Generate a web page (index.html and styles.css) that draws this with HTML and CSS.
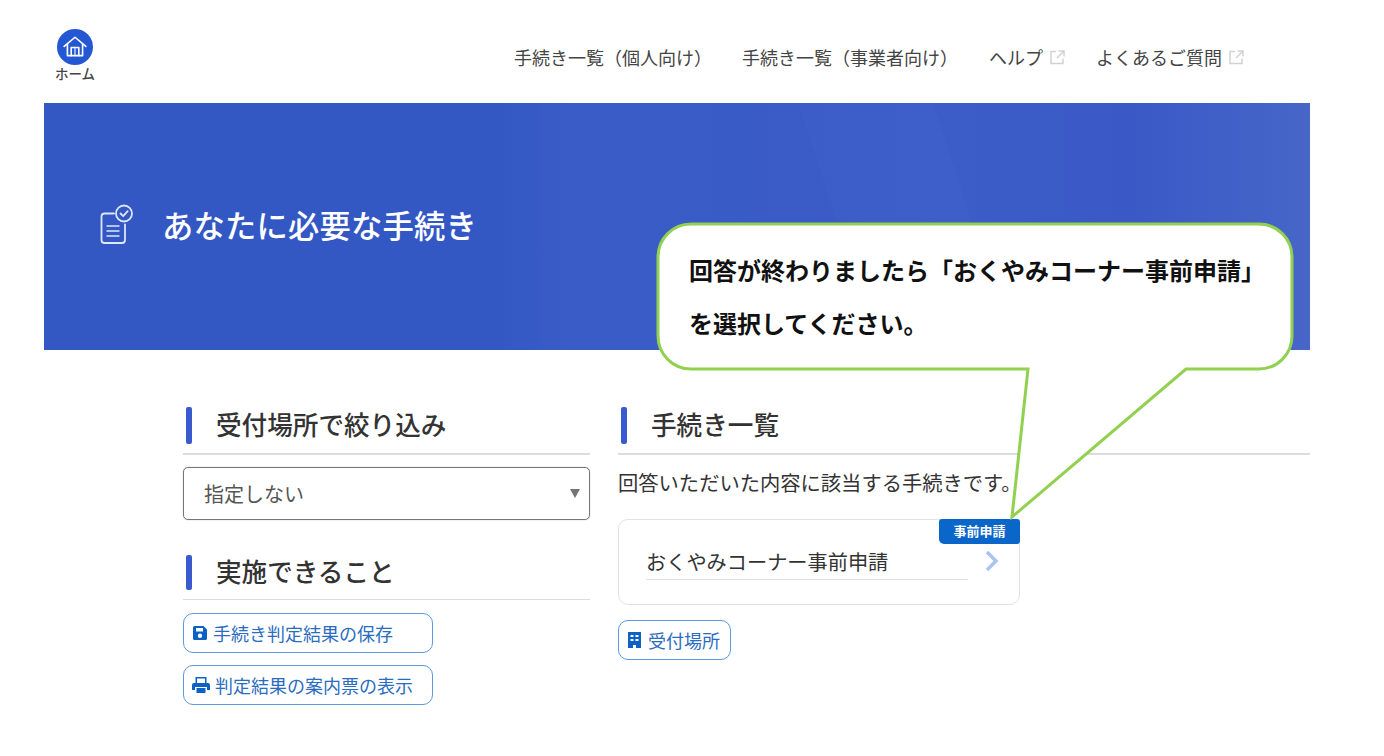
FILE: index.html
```html
<!DOCTYPE html>
<html lang="ja">
<head>
<meta charset="utf-8">
<title>あなたに必要な手続き</title>
<link rel="stylesheet" href="styles.css">
</head>
<body>
<div class="page">
  <header class="header">
    <a class="home">
      <span class="home-circle">
        <svg width="26" height="26" viewBox="0 0 24 24" fill="none" stroke="#fff" stroke-width="1.5" stroke-linejoin="round" stroke-linecap="round"><path d="M2 11.500 12 3l10 8.500"/><path d="M5 9.500v10.500h14V9.500"/><path d="M8.500 20v-7.500h7V20"/><path d="M12 12.500V20" stroke-width="1"/></svg>
      </span>
      <span class="home-label">ホーム</span>
    </a>
    <nav class="nav">
      <a class="nav-item nav-wide">手続き一覧（個人向け）</a>
      <a class="nav-item nav-wide">手続き一覧（事業者向け）</a>
      <a class="nav-item">ヘルプ<svg class="ext" width="15" height="15" viewBox="0 0 15 15" fill="none" stroke="#d2d2d2" stroke-width="1.500"><path d="M6 1.500H1v12h12V8.500M8.500 1H14v5.500M14 1 7 8"/></svg></a>
      <a class="nav-item">よくあるご質問<svg class="ext" width="15" height="15" viewBox="0 0 15 15" fill="none" stroke="#d2d2d2" stroke-width="1.500"><path d="M6 1.500H1v12h12V8.500M8.500 1H14v5.500M14 1 7 8"/></svg></a>
    </nav>
  </header>

  <section class="hero">
    <svg class="hero-icon" width="36" height="42" viewBox="0 0 36 42" fill="none" stroke="#dfe6fa" stroke-width="1.800" stroke-linecap="round" stroke-linejoin="round"><path d="M16 9.500H6.500Q3.500 9.500 3.500 12.500V36Q3.500 39 6.500 39H24Q27 39 27 36V20.500"/><circle cx="26" cy="9.500" r="8"/><path d="M22.500 9.500l2.700 2.700 4.500-5"/><path d="M9 22h12M9 27h12M9 32h12" stroke-width="1.400"/></svg>
    <h1 class="hero-title">あなたに必要な手続き</h1>
  </section>

  <main class="main">
    <aside class="side">
      <h2 class="heading">受付場所で絞り込み</h2>
      <div class="select">
        <span>指定しない</span>
        <span class="caret"></span>
      </div>
      <h2 class="heading heading-thin">実施できること</h2>
      <div class="actions">
        <a class="btn btn-wide">
          <svg width="16" height="16" viewBox="0 0 16 16" fill="#0b62c4"><path fill-rule="evenodd" d="M2.500 1h9L15 4.500v9A1.500 1.500 0 0 1 13.500 15h-11A1.500 1.500 0 0 1 1 13.500v-11A1.500 1.500 0 0 1 2.500 1ZM4 3v3.500h7V3ZM8 8.500a2.200 2.200 0 1 0 0 4.400 2.200 2.200 0 0 0 0-4.400Z"/></svg>
          手続き判定結果の保存
        </a>
        <a class="btn btn-wide">
          <svg width="18" height="18" viewBox="0 0 18 18" fill="#0b62c4"><path fill-rule="evenodd" d="M3.500 1h11v6H13V2.500H5V7H3.500ZM2 7h14a2 2 0 0 1 2 2v5h-3v-3H3v3H0V9a2 2 0 0 1 2-2ZM4.500 12h9v5h-9Z"/></svg>
          判定結果の案内票の表示
        </a>
      </div>
    </aside>

    <section class="content">
      <h2 class="heading">手続き一覧</h2>
      <p class="lead">回答いただいた内容に該当する手続きです。</p>
      <div class="card">
        <span class="badge">事前申請</span>
        <div class="card-row">
          <span class="card-name">おくやみコーナー事前申請</span>
          <svg class="chev" width="16" height="22" viewBox="0 0 16 22" fill="none" stroke="#a9c3f2" stroke-width="3.500"><path d="M3 2l9 9-9 9"/></svg>
        </div>
      </div>
      <a class="btn btn-small">
        <svg width="15" height="18" viewBox="0 0 15 18" fill="#0b62c4"><path fill-rule="evenodd" d="M1 1h13v16H9v-3H6v3H1ZM3.500 4v2h3V4Zm5 0v2h3V4ZM3.500 8v2h3V8Zm5 0v2h3V8Z"/></svg>
        受付場所
      </a>
    </section>
  </main>

  <aside class="callout">
    <svg class="callout-shape" width="644" height="304" viewBox="0 0 644 304">
      <path d="M35 2H603A33 33 0 0 1 636 35V114A33 33 0 0 1 603 147H530L356 295 372 147H35A33 33 0 0 1 2 114V35A33 33 0 0 1 35 2Z" fill="#fff" stroke="#92d050" stroke-width="3"/>
    </svg>
    <p class="callout-text">回答が終わりましたら「おくやみコーナー事前申請」<br>を選択してください。</p>
  </aside>
</div>
</body>
</html>
```

FILE: styles.css
```css
* { box-sizing: border-box; }
html, body { margin: 0; padding: 0; background: #fff; }
body {
  font-family: "Noto Sans CJK JP", "Noto Sans", sans-serif;
  color: #333;
}
h1, h2, p { margin: 0; font-weight: 500; }
.page { position: relative; width: 1384px; height: 756px; overflow: hidden; }

.header {
  height: 103px;
  padding: 29px 0 0 55px;
  display: flex;
  align-items: flex-start;
}
.home { display: flex; flex-direction: column; align-items: center; width: 40px; }
.home-circle {
  width: 36px; height: 36px; border-radius: 50%;
  background: #2458d3;
  display: flex; align-items: center; justify-content: center;
}
.home-label { font-size: 13.500px; line-height: 16px; color: #444; white-space: nowrap; font-weight: 500; }

.nav {
  display: flex;
  align-items: center;
  margin-left: 419px;
  height: 56px;
  font-size: 18px;
  color: #444;
}
.nav-item { display: flex; align-items: center; white-space: nowrap; }
.nav-wide { margin-right: 30px; }
.nav-wide:nth-child(2) { margin-right: 31px; }
.ext { margin-left: 7px; margin-right: 31px; }

.hero {
  margin-left: 44px;
  width: 1266px;
  height: 247px;
  background:
    linear-gradient(72deg, transparent 62%, rgba(255,255,255,0.012) 62%, rgba(255,255,255,0.012) 72%, transparent 72%),
    linear-gradient(90deg, #3358c4 0%, #3358c4 36%, #3a5cc7 42%, #395bc6 55%, #3c5cc8 72%, #3a59c6 86%, #4766c8 100%);
  display: flex;
  align-items: center;
  padding: 0 0 0 54px;
}
.hero-icon { margin: -4px 27px 0 0; flex: none; }
.hero-title { font-size: 31.300px; color: #fff; font-weight: 500; margin: -4px 0 0 1px; letter-spacing: 0.2px; }

.main {
  display: flex;
  padding: 52px 0 0 183px;
  gap: 28px;
  width: 1310px;
}
.side { width: 407px; flex: none; }
.content { flex: 1; }

.heading {
  position: relative;
  height: 53px;
  padding: 1px 0 0 33px;
  font-size: 25.600px;
  line-height: 41px;
  color: #333;
  border-bottom: 2px solid #dcdcdc;
}
.heading::before {
  content: "";
  position: absolute;
  left: 3px; top: 5px;
  width: 6px; height: 37px;
  border-radius: 2px;
  background: #3a5bd0;
}
.heading-thin { border-bottom-width: 1px; margin-top: 30px; height: 50px; padding-top: 0; }
.heading-thin::before { top: 5px; height: 35px; }

.select {
  margin-top: 12px;
  height: 53px;
  border: 1px solid #767676;
  border-radius: 5px;
  box-shadow: 0 0 1px #888;
  padding: 0 7px 0 20px;
  display: flex; align-items: center; justify-content: space-between;
  font-size: 20px;
  color: #555;
}
.caret {
  width: 0; height: 0;
  border-left: 5px solid transparent;
  border-right: 5px solid transparent;
  border-top: 9px solid #757575;
  margin-right: 2px;
}

.actions { display: flex; flex-direction: column; gap: 12px; margin-top: 13px; }
.btn {
  display: inline-flex;
  align-items: center;
  height: 40px;
  border: 1.500px solid #5a9ae0;
  border-radius: 10px;
  background: #fff;
  color: #2a6cc0;
  font-size: 18px;
  font-weight: 400;
  white-space: nowrap;
  padding: 0 0 0 8px;
  gap: 5px;
}
.btn-wide { width: 250px; }
.btn-small { width: 113px; margin-top: 15px; gap: 6px; }

.lead { font-size: 20.300px; color: #333; line-height: 26px; margin-top: 14px; font-weight: 400; }

.card {
  position: relative;
  margin-top: 24px;
  width: 402px;
  height: 86px;
  border: 1.500px solid #e2e2e2;
  border-radius: 10px;
  padding: 25px 19px 0 27px;
}
.badge {
  position: absolute;
  right: -1px; top: -1px;
  width: 81px; height: 25px;
  background: #0b66c9;
  border-radius: 3px 3px 3px 5px;
  color: #fff;
  font-size: 13px;
  font-weight: 700;
  text-align: center;
  line-height: 24px;
}
.card-row { display: flex; align-items: flex-start; }
.card-name {
  width: 323px;
  height: 35px;
  font-size: 20.200px;
  line-height: 34px;
  color: #333;
  border-bottom: 1px solid #e2e2e6;
  white-space: nowrap;
  font-weight: 400;
}
.chev { margin: 5px 0 0 16px; }

.callout { position: absolute; left: 656px; top: 222px; width: 644px; height: 304px; }
.callout-shape { position: absolute; left: 0; top: 0; }
.callout-text {
  position: absolute;
  left: 33px; top: 21px;
  font-size: 24px;
  line-height: 53px;
  font-weight: 700;
  color: #111;
  white-space: nowrap;
}
```
